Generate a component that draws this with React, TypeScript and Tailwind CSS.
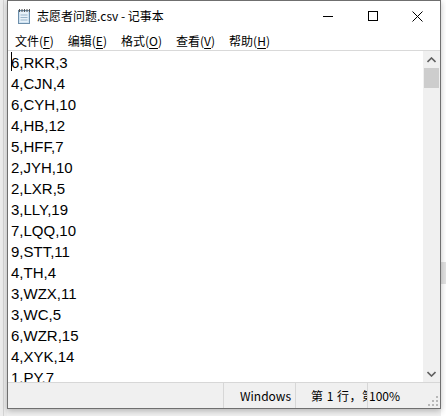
const lines = [
  '6,RKR,3',
  '4,CJN,4',
  '6,CYH,10',
  '4,HB,12',
  '5,HFF,7',
  '2,JYH,10',
  '2,LXR,5',
  '3,LLY,19',
  '7,LQQ,10',
  '9,STT,11',
  '4,TH,4',
  '3,WZX,11',
  '3,WC,5',
  '6,WZR,15',
  '4,XYK,14',
  '1,PY,7',
]

const menus = [
  { label: '文件', key: 'F' },
  { label: '编辑', key: 'E' },
  { label: '格式', key: 'O' },
  { label: '查看', key: 'V' },
  { label: '帮助', key: 'H' },
]

const ui = { fontFamily: '"Segoe UI", "Noto Sans CJK SC", sans-serif' }

function NotepadIcon() {
  return (
    <svg width="15" height="17" viewBox="0 0 15 17" aria-hidden>
      <rect x="1.5" y="2.5" width="11" height="13" fill="#cfe3f3" stroke="#6d8fab" />
      <rect x="3" y="4" width="8" height="10" fill="#e8f2fa" />
      <path d="M3.5 7h7M3.5 9.5h7M3.5 12h7" stroke="#9ab6cc" strokeWidth="1" />
      <path d="M2.5 1v3M5 1v3M7.5 1v3M10 1v3M12.5 1v3" stroke="#555" strokeWidth="1" />
    </svg>
  )
}

function Chevron({ up }: { up?: boolean }) {
  return (
    <svg width="9" height="6" viewBox="0 0 9 6" aria-hidden>
      <path d={up ? 'M0.5 5L4.5 1L8.5 5' : 'M0.5 1L4.5 5L8.5 1'} fill="none" stroke="#606060" strokeWidth="1.6" />
    </svg>
  )
}

export default function App() {
  return (
    <div className="relative h-[416px] w-[446px] overflow-hidden bg-[#f0f0f0]">
      {/* desktop bits behind */}
      <div className="absolute left-0 top-0 h-[416px] w-[7px] bg-[#ececec]">
        <div className="ml-[3px] h-full w-px bg-[#d4d4d4]" />
      </div>
      <div className="absolute left-[441px] top-0 h-[416px] w-[5px] bg-white">
        <div className="mt-[262px] h-[22px] w-full bg-[#e2e2e2]" />
      </div>

      <div
        className="absolute left-[7px] top-0 flex h-[409px] w-[434px] flex-col border border-[#6f6f6f] bg-white shadow-[0_2px_6px_rgba(0,0,0,0.25)]"
        style={ui}
      >
        {/* title bar */}
        <div className="flex h-[30px] shrink-0 items-center">
          <div className="ml-[9px] flex h-[30px] items-center">
            <NotepadIcon />
          </div>
          <span className="ml-[5px] text-[12px] text-black">志愿者问题.csv - 记事本</span>
          <div className="ml-auto flex h-[30px]">
            <div className="flex w-[45px] items-center justify-center">
              <div className="h-px w-[10px] bg-black" />
            </div>
            <div className="flex w-[45px] items-center justify-center">
              <div className="h-[10px] w-[10px] border border-black" />
            </div>
            <div className="flex w-[45px] items-center justify-center">
              <svg width="11" height="11" viewBox="0 0 11 11" aria-hidden>
                <path d="M0.5 0.5L10.5 10.5M10.5 0.5L0.5 10.5" stroke="#000" strokeWidth="1" />
              </svg>
            </div>
          </div>
        </div>

        {/* menu bar */}
        <div className="flex h-[19px] shrink-0 items-center pl-[7px] text-[12px] text-black">
          {menus.map((m) => (
            <span key={m.key} className="mr-[14px] whitespace-nowrap">
              {m.label}(<span className="underline underline-offset-2">{m.key}</span>)
            </span>
          ))}
        </div>

        {/* editor */}
        <div className="flex min-h-0 flex-1 border-t border-[#d9d9d9]">
          <div
            className="relative flex-1 overflow-hidden pl-[3px] pt-px text-[15px] leading-[21px] text-black"
            style={{ fontFamily: '"Liberation Sans", Arial, sans-serif' }}
          >
            <div className="absolute left-[3px] top-px h-[19px] w-px bg-black" />
            {lines.map((l, i) => (
              <div key={i} className="whitespace-nowrap">
                {l}
              </div>
            ))}
          </div>
          <div className="flex w-[17px] shrink-0 flex-col bg-[#f0f0f0]">
            <div className="flex h-[17px] items-center justify-center">
              <Chevron up />
            </div>
            <div className="mx-px h-[20px] bg-[#cdcdcd]" />
            <div className="flex-1" />
            <div className="flex h-[17px] items-center justify-center">
              <Chevron />
            </div>
          </div>
        </div>

        {/* status bar */}
        <div className="relative flex h-[26px] shrink-0 items-center border-t border-[#d7d7d7] bg-[#f0f0f0] text-[12px] text-black">
          <div className="h-full w-[216px] border-r border-[#d7d7d7]" />
          <div className="flex h-full w-[72px] items-center border-r border-[#d7d7d7] pl-[16px]">Windows</div>
          <div className="flex h-full w-[72px] items-center overflow-hidden whitespace-nowrap border-r border-[#d7d7d7] pl-[15px] tracking-[0.5px]">
            第 1 行，第 1 列
          </div>
          <div className="flex h-full items-center pl-px">100%</div>
          <svg className="absolute bottom-[2px] right-[2px]" width="10" height="10" viewBox="0 0 10 10" aria-hidden>
            <g fill="#b8b8b8">
              <rect x="8" y="0" width="2" height="2" />
              <rect x="4" y="4" width="2" height="2" />
              <rect x="8" y="4" width="2" height="2" />
              <rect x="0" y="8" width="2" height="2" />
              <rect x="4" y="8" width="2" height="2" />
              <rect x="8" y="8" width="2" height="2" />
            </g>
          </svg>
        </div>
      </div>
    </div>
  )
}
